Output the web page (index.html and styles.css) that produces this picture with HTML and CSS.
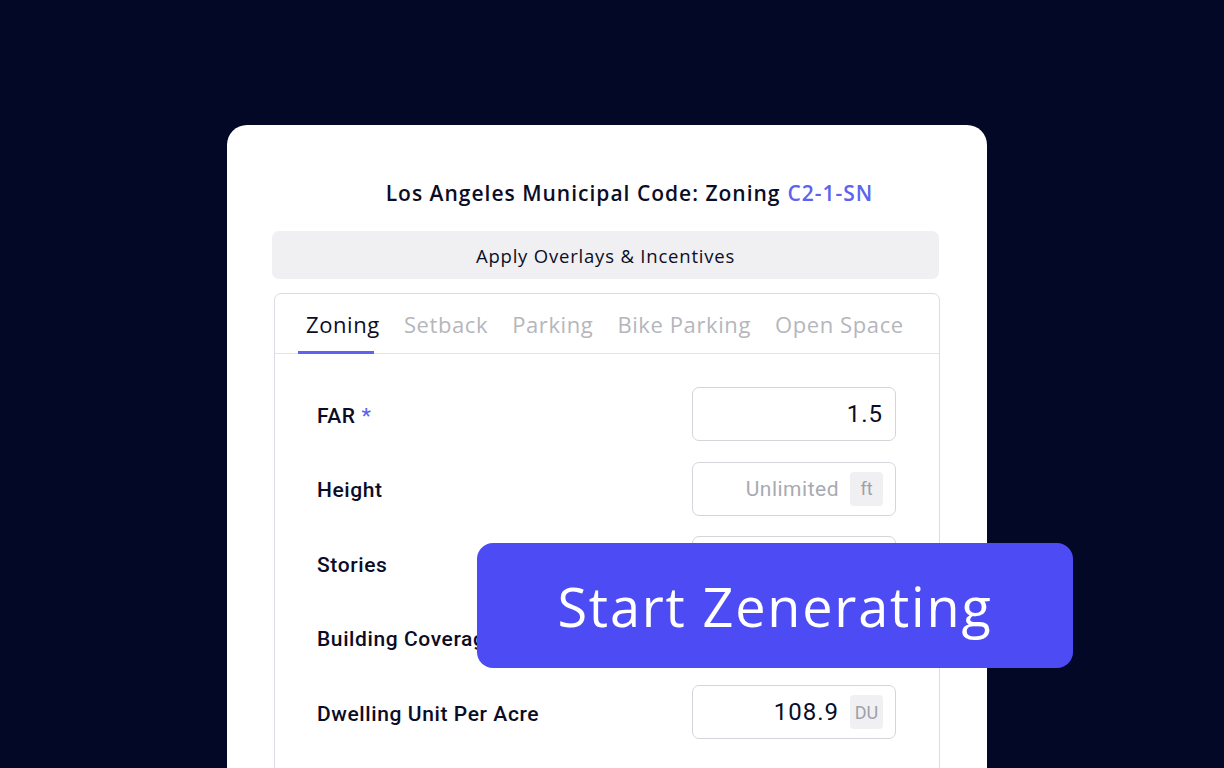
FILE: index.html
```html
<!DOCTYPE html>
<html lang="en">
<head>
<meta charset="utf-8">
<title>Start Zenerating</title>
<link rel="stylesheet" href="styles.css">
</head>
<body>
<main class="stage">
  <section class="card">
    <h1 class="title">Los Angeles Municipal Code: Zoning <span class="accent">C2-1-SN</span></h1>
    <button class="overlay-btn" type="button">Apply Overlays &amp; Incentives</button>
    <div class="panel">
      <nav class="tabs">
        <span class="tab active">Zoning</span>
        <span class="tab">Setback</span>
        <span class="tab">Parking</span>
        <span class="tab">Bike Parking</span>
        <span class="tab">Open Space</span>
      </nav>
      <div class="rows">
        <div class="row">
          <label class="label">FAR <span class="req">*</span></label>
          <div class="field"><span class="value">1.5</span></div>
        </div>
        <div class="row">
          <label class="label">Height</label>
          <div class="field"><span class="value placeholder">Unlimited</span><span class="unit">ft</span></div>
        </div>
        <div class="row">
          <label class="label">Stories</label>
          <div class="field"><span class="value"></span></div>
        </div>
        <div class="row">
          <label class="label">Building Coverage</label>
          <div class="field"><span class="value"></span></div>
        </div>
        <div class="row">
          <label class="label">Dwelling Unit Per Acre</label>
          <div class="field"><span class="value">108.9</span><span class="unit">DU</span></div>
        </div>
      </div>
    </div>
  </section>
  <button class="cta" type="button">Start Zenerating</button>
</main>
</body>
</html>
```
FILE: styles.css
```css
* { box-sizing: border-box; }
html, body {
  margin: 0;
  padding: 0;
  height: 100%;
}
body {
  background: #020826;
  overflow: hidden;
  font-family: "Open Sans", "DejaVu Sans", sans-serif;
}
.stage {
  position: relative;
  width: 1224px;
  height: 768px;
  padding-top: 125px;
  padding-left: 227px;
}
.card {
  width: 760px;
  height: 643px;
  background: #ffffff;
  border-radius: 20px 20px 0 0;
  padding: 54px 48px 0 45px;
  overflow: hidden;
}
.title {
  margin: 0;
  display: flex;
  justify-content: center;
  gap: 7px;
  padding-left: 48px;
  font-size: 21px;
  line-height: 28px;
  font-weight: 600;
  letter-spacing: 1px;
  color: #0b0d26;
  white-space: nowrap;
}
.accent { color: #5c63ef; }
.overlay-btn {
  display: block;
  width: 667px;
  height: 48px;
  margin-top: 24px;
  border: none;
  border-radius: 7px;
  background: #f0f0f3;
  font-family: "Open Sans", "DejaVu Sans", sans-serif;
  font-size: 18.5px;
  font-weight: 500;
  letter-spacing: 0.8px;
  color: #0b0d26;
}
.panel {
  margin-top: 14px;
  margin-left: 2px;
  width: 666px;
  height: 560px;
  border: 1px solid #dcdde2;
  border-radius: 7px;
}
.tabs {
  display: flex;
  gap: 24px;
  height: 60px;
  padding-left: 31px;
  border-bottom: 1px solid #e2e3e7;
  align-items: center;
}
.tab {
  position: relative;
  font-size: 22px;
  line-height: 60px;
  letter-spacing: 0.6px;
  color: #b5b6bc;
  white-space: nowrap;
}
.tab.active {
  color: #0b0d26;
  font-weight: 500;
}
.tab.active::after {
  content: "";
  position: absolute;
  left: -8px;
  bottom: 0;
  width: 76px;
  height: 3px;
  background: #5c63ef;
}
.rows {
  display: flex;
  flex-direction: column;
  gap: 20.5px;
  padding: 33px 43px 0 42px;
}
.row {
  display: flex;
  align-items: center;
  justify-content: space-between;
  height: 54px;
}
.label {
  padding-top: 3px;
  font-family: "Roboto", "Liberation Sans", sans-serif;
  font-size: 21px;
  font-weight: 500;
  letter-spacing: 0.6px;
  color: #0b0d26;
}
.req { color: #5c63ef; }
.field {
  width: 204px;
  height: 54px;
  border: 1px solid #d4d5da;
  border-radius: 7px;
  display: flex;
  align-items: center;
  justify-content: flex-end;
  gap: 11px;
  padding-right: 12px;
}
.value {
  font-family: "Roboto", "Liberation Sans", sans-serif;
  font-size: 24px;
  font-weight: 400;
  letter-spacing: 1px;
  color: #0b0d26;
}
.value.placeholder {
  font-size: 21px;
  letter-spacing: 0.5px;
  color: #a9aab1;
}
.unit {
  width: 33px;
  height: 34px;
  border-radius: 4px;
  background: #f0f0f3;
  display: flex;
  align-items: center;
  justify-content: center;
  font-family: "Roboto", "Liberation Sans", sans-serif;
  font-size: 18px;
  color: #9fa0a7;
}
.cta {
  position: absolute;
  left: 477px;
  top: 543px;
  width: 596px;
  height: 125px;
  border: none;
  border-radius: 16px;
  background: #4d4bf3;
  color: #ffffff;
  font-family: "Open Sans", "DejaVu Sans", sans-serif;
  font-size: 54px;
  font-weight: 500;
  letter-spacing: 1.8px;
}
```
